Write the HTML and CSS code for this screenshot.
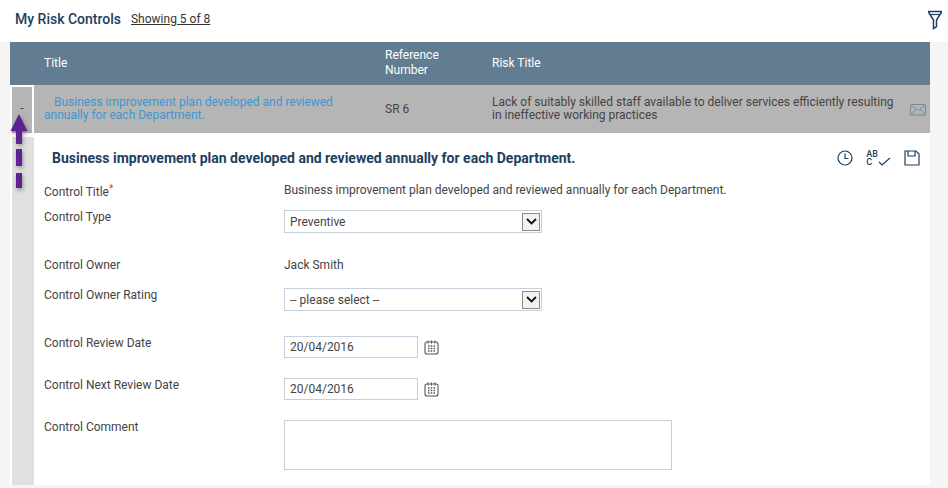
FILE: index.html
```html
<!DOCTYPE html>
<html lang="en">
<head>
    <meta charset="UTF-8">
    <title>My Risk Controls</title>
    <link rel="stylesheet" href="styles.css">
</head>
<body>
    <div class="page-head">
        <h1>My Risk Controls</h1>
        <a class="showing" href="#">Showing 5 of 8</a>
        <svg class="filter-icon" width="16" height="20" viewBox="0 0 16 20">
            <path d="M1 1.5h14M1.5 2l5 8v8.500l3-2V10l5-8" fill="none" stroke="#1d4060" stroke-width="1.500"/>
            <path d="M3.500 4.500h9" stroke="#1d4060" stroke-width="1.200"/>
        </svg>
    </div>

    <div class="main">
        <div class="table-head">
            <div class="col-title">Title</div>
            <div class="col-ref">Reference<br>Number</div>
            <div class="col-risk">Risk Title</div>
        </div>

        <div class="row">
            <div class="toggle">-</div>
            <div class="row-title"><a href="#">Business improvement plan developed and reviewed annually for each Department.</a></div>
            <div class="col-ref">SR 6</div>
            <div class="col-risk">Lack of suitably skilled staff available to deliver services efficiently resulting in ineffective working practices</div>
            <svg class="mail-icon" width="16" height="12" viewBox="0 0 16 12">
                <rect x="0.500" y="0.500" width="15" height="10.500" rx="1" fill="none" stroke="#6f8a9e"/>
                <path d="M1 1l7 5.500L15 1M1 10.500l5-5.500M15 10.500l-5-5.500" fill="none" stroke="#6f8a9e" stroke-width="0.800"/>
            </svg>
        </div>

        <div class="detail">
            <div class="detail-side"></div>
            <div class="detail-body">
                <div class="detail-head">
                    <h2>Business improvement plan developed and reviewed annually for each Department.</h2>
                    <div class="detail-icons">
                        <svg width="16" height="16" viewBox="0 0 16 16">
                            <circle cx="8" cy="8" r="7" fill="none" stroke="#1d4060" stroke-width="1.200"/>
                            <path d="M8 3.500V8.500h3.500" fill="none" stroke="#1d4060" stroke-width="1.200"/>
                        </svg>
                        <span class="spell-icon">
                            <span class="spell-text">AB<br>C</span>
                            <svg width="13" height="9" viewBox="0 0 13 9"><path d="M1 5l3 3 8-7" fill="none" stroke="#1d4060" stroke-width="1.200"/></svg>
                        </span>
                        <svg width="16" height="16" viewBox="0 0 16 16">
                            <path d="M1 1h11l3 3v11H1z" fill="none" stroke="#1d4060" stroke-width="1.200"/>
                            <path d="M4 1v5h7V1" fill="none" stroke="#1d4060" stroke-width="1.200"/>
                        </svg>
                    </div>
                </div>

                <div class="field field-title">
                    <label>Control Title<span class="req">*</span></label>
                    <div class="value">Business improvement plan developed and reviewed annually for each Department.</div>
                </div>
                <div class="field field-type">
                    <label>Control Type</label>
                    <div class="select-box"><span>Preventive</span><span class="select-btn"><svg width="11" height="7" viewBox="0 0 11 7"><path d="M1 1l4.500 4.500L10 1" fill="none" stroke="#111" stroke-width="1.800"/></svg></span></div>
                </div>
                <div class="field field-owner">
                    <label>Control Owner</label>
                    <div class="value">Jack Smith</div>
                </div>
                <div class="field field-rating">
                    <label>Control Owner Rating</label>
                    <div class="select-box"><span>-- please select --</span><span class="select-btn"><svg width="11" height="7" viewBox="0 0 11 7"><path d="M1 1l4.500 4.500L10 1" fill="none" stroke="#111" stroke-width="1.800"/></svg></span></div>
                </div>
                <div class="field field-date">
                    <label>Control Review Date</label>
                    <input class="date-input" type="text" value="20/04/2016">
                    <svg class="cal-icon" width="15" height="15" viewBox="0 0 15 15">
                        <rect x="1" y="2" width="13" height="12" rx="2" fill="none" stroke="#555" stroke-width="1.100"/>
                        <path d="M4 0.500v3M7.500 0.500v3M11 0.500v3" stroke="#555"/>
                        <path d="M4 6h1.500M6.750 6h1.500M9.500 6H11M4 8.500h1.500M6.750 8.500h1.500M9.500 8.500H11M4 11h1.500M6.750 11h1.500M9.500 11H11" stroke="#555" stroke-width="1.300"/>
                    </svg>
                </div>
                <div class="field field-date">
                    <label>Control Next Review Date</label>
                    <input class="date-input" type="text" value="20/04/2016">
                    <svg class="cal-icon" width="15" height="15" viewBox="0 0 15 15">
                        <rect x="1" y="2" width="13" height="12" rx="2" fill="none" stroke="#555" stroke-width="1.100"/>
                        <path d="M4 0.500v3M7.500 0.500v3M11 0.500v3" stroke="#555"/>
                        <path d="M4 6h1.500M6.750 6h1.500M9.500 6H11M4 8.500h1.500M6.750 8.500h1.500M9.500 8.500H11M4 11h1.500M6.750 11h1.500M9.500 11H11" stroke="#555" stroke-width="1.300"/>
                    </svg>
                </div>
                <div class="field field-comment">
                    <label>Control Comment</label>
                    <textarea class="comment"></textarea>
                </div>
            </div>
        </div>

        <!-- annotation arrow over the expand cell -->
        <svg class="arrow" width="18" height="75" viewBox="0 0 18 75">
            <path d="M9 0L17.500 17H12V30H6V17H0.500z" fill="#5e2390"/>
            <path d="M6 35h6v17H6zM6 59h6v15H6z" fill="#5e2390"/>
        </svg>
    </div>
</body>
</html>
```

FILE: styles.css
```css
html, body {
    height: 100%;
}
body {
    font-family: Roboto, "Liberation Sans", sans-serif;
    font-size: 12px;
    color: #444;
    margin: 0;
    overflow: hidden;
    background-color: #fff;
}
.page-head {
    display: flex;
    align-items: center;
    height: 42px;
    padding: 0 5px 4px 15px;
    box-sizing: border-box;
}
.page-head h1 {
    font-size: 14px;
    font-weight: 500;
    color: #1d4060;
    margin: 0 10px 0 0;
}
.showing {
    color: #333;
    text-decoration: underline;
}
.filter-icon {
    margin-left: auto;
    margin-top: 2px;
}
.main {
    position: relative;
    padding: 0 18px 0 10px;
    background-color: #f5f5f5;
    height: 446px;
}
.table-head {
    display: flex;
    align-items: center;
    height: 42px;
    background-color: #627c92;
    color: #fff;
    border-bottom: 1px solid #7a7a7a;
    line-height: 15px;
}
.col-title {
    width: 341px;
    margin-left: 34px;
}
.table-head .col-ref {
    color: #fff;
}
.col-ref {
    width: 107px;
}
.col-risk {
    flex: 1;
}
.row {
    display: flex;
    align-items: center;
    height: 48px;
    background-color: #b5b5b5;
    line-height: 13px;
}
.toggle {
    box-sizing: border-box;
    width: 24px;
    height: 48px;
    margin-right: 10px;
    background-color: #b5b5b5;
    border: 2px solid #fff;
    border-bottom-width: 0;
    box-shadow: inset 0 0 0 0 #fff;
    text-align: center;
    line-height: 42px;
}
.row-title {
    width: 341px;
    padding-right: 40px;
    box-sizing: border-box;
    text-indent: 10px;
    color: #3a97d8;
}
.row-title a {
    color: #3a97d8;
    text-decoration: none;
}
.row .col-ref {
    color: #444;
}
.row .col-risk {
    padding-right: 14px;
}
.mail-icon {
    margin: 2px 4px 0 0;
}
.detail {
    display: flex;
    background-color: #fff;
    height: 352px;
}
.detail-side {
    width: 22px;
    margin: 4px 0 0 2px;
    height: 348px;
    background-color: #e0e0e0;
    flex: none;
}
.detail-body {
    flex: 1;
    padding: 0 10px 0 10px;
}
.detail-head {
    display: flex;
    align-items: center;
    justify-content: space-between;
    height: 50px;
    padding-top: 0;
}
.detail-head h2 {
    font-size: 14px;
    font-weight: 700;
    color: #1d4060;
    margin: 0 0 0 8px;
}
.detail-icons {
    display: flex;
    align-items: center;
    gap: 13px;
}
.spell-icon {
    display: flex;
    align-items: flex-end;
}
.spell-text {
    font-size: 9px;
    font-weight: 500;
    line-height: 8px;
    color: #1d4060;
}
.field {
    display: flex;
    align-items: flex-start;
}
.field label {
    width: 240px;
    flex: none;
    color: #444;
}
.req {
    color: #e33;
    font-size: 10px;
    vertical-align: 4px;
}
.field-title {
    height: 27px;
}
.field-type {
    height: 48px;
}
.field-owner {
    height: 30px;
}
.field-rating {
    height: 48px;
}
.field-date {
    height: 42px;
}
.select-box {
    display: flex;
    align-items: center;
    justify-content: space-between;
    box-sizing: border-box;
    width: 258px;
    height: 23px;
    padding: 0 1px 0 5px;
    border: 1px solid #c4d0dc;
    background-color: #fff;
}
.select-btn {
    display: flex;
    align-items: center;
    justify-content: center;
    width: 18px;
    height: 18px;
    border: 1px solid #8a8a8a;
    box-sizing: border-box;
    background-color: #f2f2f2;
}
.date-input {
    box-sizing: border-box;
    width: 134px;
    height: 22px;
    padding: 0 5px;
    border: 1px solid #c4d0dc;
    font-family: inherit;
    font-size: 12px;
    color: #444;
}
.cal-icon {
    margin: 4px 0 0 6px;
}
.comment {
    box-sizing: border-box;
    width: 388px;
    height: 50px;
    border: 1px solid #c4d0dc;
    resize: none;
    display: block;
}
.arrow {
    position: absolute;
    left: 10px;
    top: 72px;
    filter: drop-shadow(1px 2px 2px rgba(0, 0, 0, 0.35));
}
```
